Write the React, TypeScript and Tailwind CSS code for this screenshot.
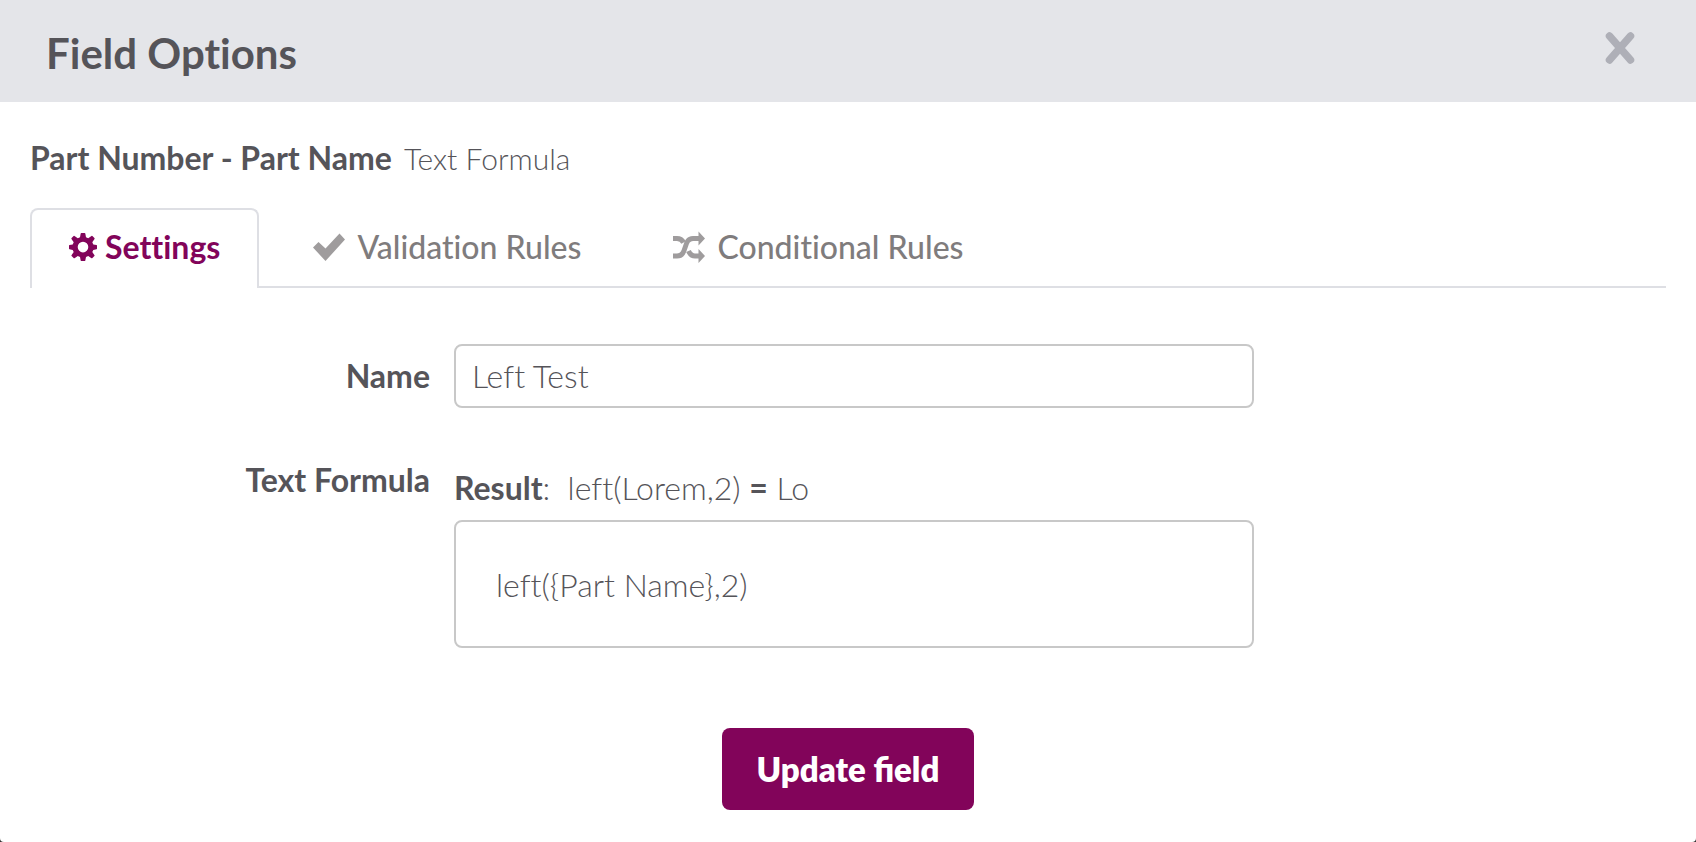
import { useState } from "react";
import type { ReactNode } from "react";

// ─── Icons ────────────────────────────────────────────────────────────────────

function GearIcon() {
  return (
    <svg viewBox="0 0 28 32" className="h-8 w-7 shrink-0" fill="currentColor" fillRule="evenodd" aria-hidden="true">
      <path d="M12.400 2h3.200q.6 0 .7.600l.7 3.600 2.200 1L22.500 5q.5-.3.900.1l2 2q.4.400.1.900L23.300 11.200l1 2.300 3.200.6q.5.100.5.600v2.900q0 .5-.5.600l-3.200.7-1 2.200 2.200 3.100q.3.500-.1.900l-2 2q-.4.400-.9.100L19.200 25l-2.200.9-.7 3.600q-.1.500-.7.500h-3.200q-.6 0-.7-.5l-.7-3.600L8.800 25l-3.300 2.200q-.5.300-.9-.1l-2-2q-.4-.4-.1-.9l2.200-3.100-1-2.200-3.200-.7q-.5-.1-.5-.6v-2.900q0-.5.5-.6l3.200-.6 1-2.300L2.500 8q-.3-.5.1-.9l2-2q.4-.4.900-.1l3.300 2.200 2.200-1 .7-3.600q.1-.6.7-.6zM14 10.800a5.300 5.300 0 1 0 0 10.600 5.300 5.300 0 0 0 0-10.600z" />
    </svg>
  );
}

function CheckIcon() {
  return (
    <svg viewBox="0 0 32 32" className="h-8 w-8 shrink-0 opacity-75" fill="currentColor" aria-hidden="true">
      <path d="M26.500 2.500l5.500 6-19.500 21.500L0 16.500l5.500-5.500 7 6.500z" />
    </svg>
  );
}

// The rising band is cut off from the falling one by a thin gap.
function ShuffleIcon() {
  return (
    <svg viewBox="0 0 32 32" className="h-8 w-8 shrink-0 opacity-75" fill="none" stroke="currentColor" strokeWidth="5" aria-hidden="true">
      <path d="M0 25h4c11 0 5.500-17.500 16-17.500h6" />
      <path d="M0 7.500h4c3.500 0 5.300 1.600 6.600 4M15.500 20c1.300 3 3 5 6.500 5h4" />
      <path d="M25.500.5l6.500 7-6.500 7zM25.500 18l6.500 7-6.500 7z" fill="currentColor" stroke="none" />
    </svg>
  );
}

function CloseIcon() {
  return (
    <svg viewBox="0 0 32 32" className="h-8 w-8" fill="none" stroke="currentColor" strokeWidth="7.500" strokeLinecap="round" aria-hidden="true">
      <path d="M5.500 4l21 24M26.500 4l-21 24" />
    </svg>
  );
}

// ─── Tabs ─────────────────────────────────────────────────────────────────────

const TABS: { id: string; label: string; icon: ReactNode }[] = [
  { id: "settings", label: "Settings", icon: <GearIcon /> },
  { id: "validation", label: "Validation Rules", icon: <CheckIcon /> },
  { id: "conditional", label: "Conditional Rules", icon: <ShuffleIcon /> },
];

export default function App() {
  const [tab, setTab] = useState("settings");
  const [name, setName] = useState("Left Test");
  const [formula, setFormula] = useState("left({Part Name},2)");

  return (
    <div className="min-h-screen bg-[#333]">
      <main className="min-h-screen rounded-b bg-white font-['Lato',sans-serif] text-[32px] leading-[40px] font-light text-[#555459] [font-variant-ligatures:none]">
        <header className="flex items-start justify-between bg-[#e4e5e9] px-[46px] pt-7 pb-6">
          <h1 className="text-[42px] leading-[50px] font-bold">Field Options</h1>
          <button type="button" aria-label="Close" className="mr-3.5 pt-1 text-[#aeafb7]">
            <CloseIcon />
          </button>
        </header>

        <div className="px-[30px] pt-9">
          <h2>
            <strong className="mr-3 font-bold">Part Number - Part Name</strong>
            <span className="text-[30px]">Text Formula</span>
          </h2>

          <div role="tablist" className="mt-[30px] flex border-b-2 border-[#dedfe4]">
            {TABS.map(({ id, label, icon }) => (
              <button
                key={id}
                type="button"
                role="tab"
                aria-selected={tab === id}
                onClick={() => setTab(id)}
                className={
                  tab === id
                    ? "mr-2 -mb-0.5 flex h-20 items-center gap-2 rounded-t-lg border-2 border-b-0 border-[#dedfe4] bg-white px-[37px] pb-1 font-bold text-[#82045a]"
                    : "flex h-[78px] items-center gap-3 px-[46px] font-medium text-[#7f7c7d]"
                }
              >
                {icon}
                {label}
              </button>
            ))}
          </div>

          <form className="pt-14" onSubmit={(e) => e.preventDefault()}>
            <div className="grid grid-cols-[400px_minmax(0,800px)] gap-x-6">
              <label htmlFor="name" className="pt-3 text-right font-bold">Name</label>
              <input
                id="name"
                value={name}
                onChange={(e) => setName(e.target.value)}
                className="h-16 rounded-lg border-2 border-[#c8c8c8] px-4 pb-0.5"
              />
            </div>

            <div className="mt-[52px] grid grid-cols-[400px_minmax(0,800px)] gap-x-6">
              <label htmlFor="formula" className="text-right font-bold">Text Formula</label>
              <div className="pt-2">
                <p>
                  <strong className="font-bold">Result</strong>:&nbsp; left(Lorem,2) <strong className="font-bold">=</strong> Lo
                </p>
                <textarea
                  id="formula"
                  value={formula}
                  onChange={(e) => setFormula(e.target.value)}
                  className="mt-3 block h-32 w-full resize-none rounded-lg border-2 border-[#c8c8c8] px-10 py-[43px]"
                />
              </div>
            </div>

            <div className="flex justify-center pt-20 pb-8">
              <button
                type="submit"
                className="rounded-lg bg-[#82045a] px-[35px] py-[21px] text-[33px] font-extrabold text-white [font-variant-ligatures:normal]"
              >
                Update field
              </button>
            </div>
          </form>
        </div>
      </main>
    </div>
  );
}
